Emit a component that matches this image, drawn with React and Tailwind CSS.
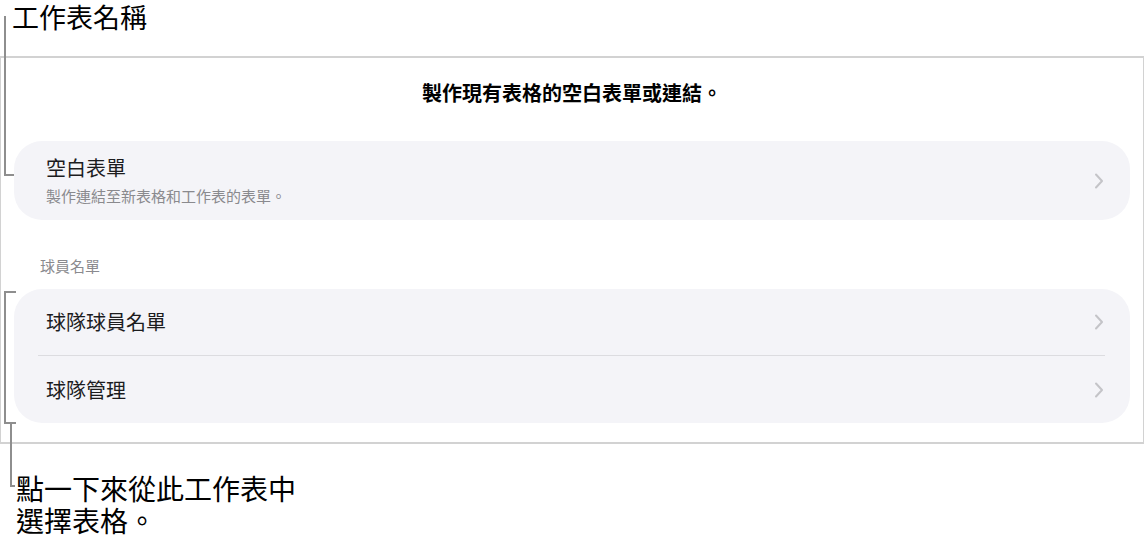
import React from 'react';

const Chevron = () => (
  <svg width="10" height="16" viewBox="0 0 10 16" fill="none" className="shrink-0">
    <path d="M2 1.5L8 8L2 14.5" stroke="#c4c4c8" strokeWidth="2" strokeLinecap="round" strokeLinejoin="round" />
  </svg>
);

const Callouts = () => (
  <svg className="absolute inset-0 pointer-events-none" width="1144" height="540" viewBox="0 0 1144 540" fill="none">
    <path d="M5 16V175H14" stroke="#8e8e8e" strokeWidth="2" />
    <path d="M16 292H5V423H16" stroke="#8e8e8e" strokeWidth="2" />
    <path d="M11 423V486H15" stroke="#8e8e8e" strokeWidth="2" />
  </svg>
);

const Row = ({ label, h }) => (
  <div className={`${h} flex items-center justify-between pl-[32px] pr-[26px]`}>
    <span className="text-[20px] leading-[24px] text-[#1c1c1e]">{label}</span>
    <Chevron />
  </div>
);

export default function App() {
  return (
    <div
      className="relative w-[1144px] h-[540px] bg-white flex flex-col text-black overflow-hidden"
      style={{ fontFamily: '"Noto Sans CJK TC", "Noto Sans", sans-serif' }}
    >
      <div className="h-[56px] pl-[12px] text-[27px] leading-[34px]">工作表名稱</div>

      <div className="border-t-2 border-b-2 border-x border-[#d2d2d2] flex flex-col px-[13px] pt-[21px] pb-[19px]">
        <h1 className="text-center text-[20px] leading-[28px] font-bold">製作現有表格的空白表單或連結。</h1>

        <div className="mt-[34px] h-[79px] rounded-[28px] bg-[#f4f4f8] flex items-center justify-between pl-[32px] pr-[26px]">
          <div className="flex flex-col">
            <span className="text-[20px] leading-[24px] text-[#1c1c1e]">空白表單</span>
            <span className="mt-[6px] text-[15px] leading-[20px] text-[#8a8a8e]">製作連結至新表格和工作表的表單。</span>
          </div>
          <Chevron />
        </div>

        <div className="mt-[36px] pl-[26px] text-[15px] leading-[20px] text-[#8a8a8e]">球員名單</div>

        <div className="mt-[13px] rounded-[28px] bg-[#f4f4f8] flex flex-col">
          <Row label="球隊球員名單" h="h-[66px]" />
          <div className="h-px bg-[#dcdce0] ml-[24px] mr-[25px]" />
          <Row label="球隊管理" h="h-[67px]" />
        </div>
      </div>

      <div className="mt-[28px] pl-[16px] text-[28px] leading-[32px]">
        <div>點一下來從此工作表中</div>
        <div>選擇表格。</div>
      </div>

      <Callouts />
    </div>
  );
}
